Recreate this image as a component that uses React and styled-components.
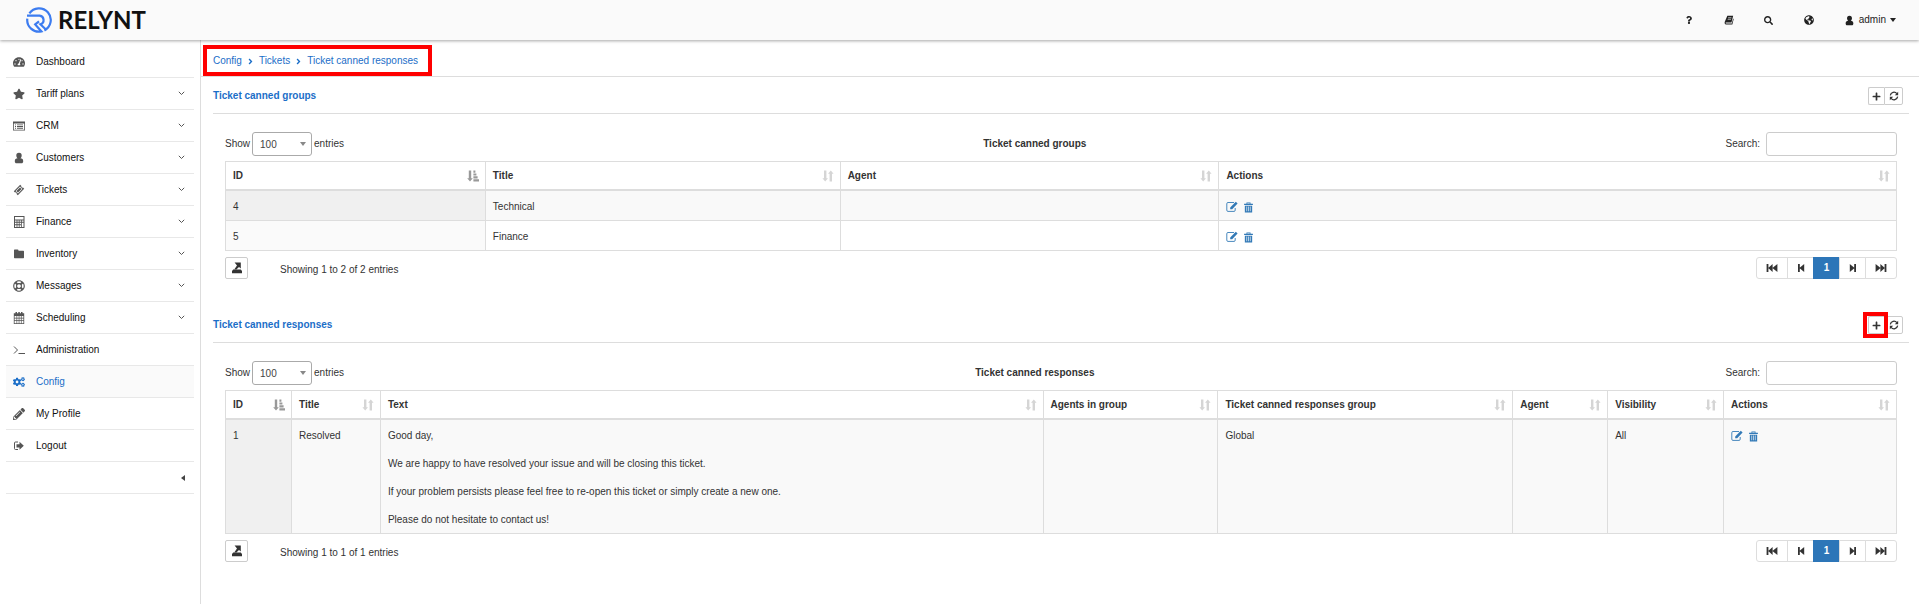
import React from 'react';
import styled, { createGlobalStyle, css } from 'styled-components';
import {
  FaTachometerAlt, FaStar, FaRegLifeRing, FaCogs, FaPencilAlt, FaAngleRight,
  FaPlus, FaSearch, FaGlobeAmericas, FaQuestion,
} from 'react-icons/fa';

const GlobalStyle = createGlobalStyle`
  * { box-sizing: border-box; }
  html, body { margin: 0; }
  body {
    background: #fff;
    color: #333;
    font: 10px/14px "Liberation Sans", Arial, sans-serif;
  }
  button, input, select { font: inherit; color: inherit; }
  a { text-decoration: none; }
  svg { display: block; flex: none; }
`;

/* ---------- icons ---------- */

const Icon = ({ children, size = 12, ...rest }) => (
  <svg width={size} height={size} viewBox="0 0 12 12" fill="currentColor" aria-hidden="true" {...rest}>{children}</svg>
);
const UserIcon = (p) => (
  <Icon {...p}><path d="M6 .8C7.9.8 8.8 2.1 8.7 3.8 8.6 5.1 7.8 6 7.4 6.3 9.2 6.4 10.2 7.2 10.2 9.2 10.2 10.6 9.4 11.2 8.6 11.2H3.4C2.6 11.2 1.8 10.6 1.8 9.2 1.8 7.2 2.8 6.4 4.6 6.3 4.2 6 3.4 5.1 3.3 3.8 3.2 2.1 4.1.8 6 .8Z" /></Icon>
);
const ListIcon = (p) => (
  <Icon {...p}>
    <path fillRule="evenodd" d="M0 1.5H12V10.5H0ZM.8 3.5V9.7H11.2V3.5Z" />
    <path d="M2 4.4H3V5.3H2ZM4 4.4H10V5.3H4ZM2 6.1H3V7H2ZM4 6.1H10V7H4ZM2 7.8H3V8.7H2ZM4 7.8H10V8.7H4Z" />
  </Icon>
);
const TicketIcon = (p) => (
  <Icon {...p}>
    <path fillRule="evenodd" d="M7.2 .8 8.4 2A1.2 1.2 0 0 0 10 3.6L11.2 4.8 4.8 11.2 3.6 10A1.2 1.2 0 0 0 2 8.4L.8 7.2ZM7 2.6 2.6 7 5 9.4 9.4 5Z" />
    <path d="M7 3.4 8.6 5 5 8.6 3.4 7Z" />
  </Icon>
);
const CalculatorIcon = (p) => (
  <Icon {...p}>
    <path fillRule="evenodd" d="M1 0H11.5V12H1ZM2 1V3.4H10.5V1ZM2 4.4V5.8H3.6V4.4ZM4.4 4.4V5.8H5.8V4.4ZM6.6 4.4V5.8H8V4.4ZM8.8 4.4V5.8H10.5V4.4ZM2 6.8V8.2H3.6V6.8ZM4.4 6.8V8.2H5.8V6.8ZM6.6 6.8V8.2H8V6.8ZM2 9.3V10.9H3.6V9.3ZM4.4 9.3V10.9H5.8V9.3ZM6.6 9.3V10.9H8V9.3ZM8.8 6.8V10.9H10.5V6.8Z" />
  </Icon>
);
const FolderIcon = (p) => (
  <Icon {...p}><path d="M1.6 1.5H4.6Q5.4 1.5 5.6 2.8H10.4Q11 2.8 11 3.4V9.6Q11 10.2 10.4 10.2H1.6Q1 10.2 1 9.6V2.1Q1 1.5 1.6 1.5Z" /></Icon>
);
const CalendarIcon = (p) => (
  <Icon {...p}>
    <path fillRule="evenodd" d="M2.5 0H4V1.2H5.3V0H6.8V1.2H8V0H9.5V1.2H11.2V12H.8V1.2H2.5ZM1.6 4V5.7H3.5V4ZM4.2 4V5.7H5.7V4ZM6.4 4V5.7H7.9V4ZM8.6 4V5.7H10.4V4ZM1.6 6.4V8.3H3.5V6.4ZM4.2 6.4V8.3H5.7V6.4ZM6.4 6.4V8.3H7.9V6.4ZM8.6 6.4V8.3H10.4V6.4ZM1.6 9V11.2H3.5V9ZM4.2 9V11.2H5.7V9ZM6.4 9V11.2H7.9V9ZM8.6 9V11.2H10.4V9Z" />
  </Icon>
);
const TerminalIcon = (p) => (
  <Icon {...p}><path d="M1 2.5 4.5 6 1 9.5M5.5 9.5H12" fill="none" stroke="currentColor" /></Icon>
);
const LogoutIcon = (p) => (
  <Icon {...p}>
    <path d="M5 2H2.5A1 1 0 0 0 1.5 3V8.5A1 1 0 0 0 2.5 9.5H5" fill="none" stroke="currentColor" />
    <path d="M3.5 4.2H6.5V1.8L10.8 5.8 6.5 9.8V7.4H3.5Z" />
  </Icon>
);
const BookIcon = (p) => (
  <Icon {...p}>
    <path fillRule="evenodd" d="M4 1H11L9 9H2.2Q1.5 9.8 2.4 10.2H9.4L11 4.2Q11.8 4.6 11.5 5.4L10 11.4H2Q.2 10.6.8 8.5ZM5 3 4.8 3.8H8.8L9 3ZM4.5 5 4.3 5.8H8.3L8.5 5Z" />
  </Icon>
);
const RefreshIcon = (p) => (
  <Icon {...p}>
    <path d="M1.6 5.2A4.4 4.4 0 0 1 9.4 3.2M10.4 6.8A4.4 4.4 0 0 1 2.6 8.8" fill="none" stroke="currentColor" strokeWidth="1.5" />
    <path d="M11 1V5H7ZM1 11V7H5Z" />
  </Icon>
);
const EditIcon = (p) => (
  <Icon {...p}>
    <path d="M8 1.5H2A1.2 1.2 0 0 0 .8 2.7V9.2A1.2 1.2 0 0 0 2 10.4H8A1.2 1.2 0 0 0 9.2 9.2V7" fill="none" stroke="currentColor" strokeWidth=".9" />
    <path d="M9.8 .8 11.6 2.6 6.2 8.2H4.2V6.4Z" />
  </Icon>
);
const TrashIcon = (p) => (
  <Icon {...p}>
    <path fillRule="evenodd" d="M3.8.6H8.2V2H10.8V3.4H1.2V2H3.8ZM4.7 1.4V2H7.3V1.4ZM2 4H10V11.4H2ZM3.8 5V10H4.5V5ZM5.7 5V10H6.4V5ZM7.5 5V10H8.2V5Z" />
  </Icon>
);
const SortIcon = (p) => (
  <Icon {...p}>
    <path d="M2 .5H4.4V8.3H6L3.2 11.6.4 8.3H2ZM7.6 11.5H10V3.7H11.6L8.8 .4 6 3.7H7.6Z" />
  </Icon>
);
const SortedIcon = (p) => (
  <Icon {...p}>
    <path d="M1.8 .5H4.2V8.3H5.8L3 11.6.2 8.3H1.8ZM6.4.5H8.4V2.7H6.4ZM6.4 3.4H9.4V5.6H6.4ZM6.4 6.3H10.6V8.5H6.4ZM6.4 9.2H12V11.5H6.4Z" />
  </Icon>
);
const ExportIcon = (p) => (
  <Icon {...p}>
    <path d="M3.6.6H9.8V6.4L8 5 5.6 7.3H3.4L6 3.4ZM2.2 7.4H9.8L11 9V11.2H1V9Z" />
  </Icon>
);
const StepIcon = ({ double, forward }) => (
  <Icon transform={forward ? 'scale(-1 1)' : undefined}>
    {double
      ? <path d="M.6 2H2.4V10H.6ZM2.2 6 6.6 2V10ZM6.4 6 11.4 2V10Z" />
      : <path d="M3 2H4.8V10H3ZM4.4 6 9.2 2V10Z" />}
  </Icon>
);
const AngleIcon = () => (
  <svg width="7" height="5" viewBox="0 0 7 5" fill="none" stroke="currentColor" aria-hidden="true">
    <path d="M.8 .8 3.5 3.5 6.2 .8" />
  </svg>
);
const CaretDown = () => (
  <svg width="6" height="4" viewBox="0 0 6 4" fill="currentColor" aria-hidden="true"><path d="M0 0H6L3 4Z" /></svg>
);
const CaretLeft = () => (
  <svg width="4" height="6" viewBox="0 0 4 6" fill="currentColor" aria-hidden="true"><path d="M4 0V6L0 3Z" /></svg>
);
const LogoMark = () => (
  <svg width="26" height="26" viewBox="0 0 26 26" fill="none" stroke="#3c7cf0" strokeWidth="2.2" aria-hidden="true">
    <path d="M3.4 6.4A11.7 11.7 0 1 1 18.4 23.4" />
    <path d="M1 8.6H13.6A4.4 4.4 0 0 1 14.4 17.2L20.4 23" />
    <path d="M1.3 11.6A11.7 11.7 0 0 0 15.4 24.4L9.2 17.4 13 14.4" />
  </svg>
);

/* ---------- page frame ---------- */

const TopBar = styled.header`
  position: relative;
  z-index: 1;
  display: flex;
  align-items: center;
  justify-content: space-between;
  height: 40px;
  padding: 0 23px 0 26px;
  background: #fafafa;
  box-shadow: 0 1px 3px rgba(0, 0, 0, 0.35);
`;
const Brand = styled.a`
  display: flex;
  align-items: center;
  gap: 6px;
  color: #111;
  font: 700 24px/26px Lato, sans-serif;
`;
const TopActions = styled.nav`
  display: flex;
  align-items: center;
  gap: 30px;
  color: #222;
`;
const TopButton = styled.button`
  display: flex;
  align-items: center;
  justify-content: center;
  gap: ${(p) => (p.$user ? '4px' : '0')};
  min-width: 10px;
  padding: 0;
  border: 0;
  background: none;
`;
const Body = styled.div`
  display: flex;
  min-height: calc(100vh - 40px);
`;
const Sidebar = styled.nav`
  flex: none;
  width: 201px;
  padding: 6px 6px 0;
  border-right: 1px solid #ddd;
`;
const navRow = css`
  display: flex;
  align-items: center;
  width: 100%;
  height: 32px;
  padding: 0 9px 0 7px;
  border: 0;
  border-bottom: 1px solid #e8e8e8;
`;
const NavItem = styled.a`
  ${navRow}
  gap: 11px;
  color: ${(p) => (p.$active ? '#1b6ec8' : '#111')};
  background: ${(p) => (p.$active ? '#fafafa' : 'transparent')};
  svg { color: ${(p) => (p.$active ? '#1b6ec8' : '#555')}; }
`;
const NavLabel = styled.span`
  flex: 1;
`;
const CollapseButton = styled.button`
  ${navRow}
  justify-content: flex-end;
  background: none;
  color: #444;
`;
const Main = styled.main`
  flex: 1;
  min-width: 0;
`;
const Breadcrumbs = styled.nav`
  display: flex;
  align-items: center;
  height: 37px;
  padding: 6px 12px 0;
  border-bottom: 1px solid #ddd;
`;
const Trail = styled.div`
  position: relative;
  display: flex;
  align-items: center;
  gap: 4px;
  color: #1b6ec8;
  a { color: inherit; }
`;
const Highlight = styled.span`
  position: absolute;
  z-index: 1;
  inset: ${(p) => p.$inset};
  border: 4px solid #f00;
  pointer-events: none;
`;

/* ---------- sections ---------- */

const Section = styled.section`
  padding: 0 10px 27px 12px;
`;
const SectionHeader = styled.div`
  display: flex;
  align-items: center;
  justify-content: space-between;
  height: 37px;
  padding: 2px 6px 0 0;
  border-bottom: 1px solid #ddd;
`;
const SectionTitle = styled.h2`
  margin: 0;
  color: #1b6ec8;
  font-size: 10px;
`;
const ButtonGroup = styled.div`
  position: relative;
  display: flex;
`;
const SmallButton = styled.button`
  display: flex;
  align-items: center;
  justify-content: center;
  width: ${(p) => (p.$first ? '16px' : '19px')};
  height: 18px;
  padding: 0;
  border: 1px solid #ccc;
  border-right-width: ${(p) => (p.$first ? '0' : '1px')};
  border-radius: ${(p) => (p.$first ? '2px 0 0 2px' : '0 2px 2px 0')};
  background: #fff;
`;
const SectionBody = styled.div`
  padding: 18px 12px 0;
`;
const Toolbar = styled.div`
  display: flex;
  align-items: center;
  justify-content: space-between;
  margin-bottom: 5px;
`;
const LengthLabel = styled.label`
  display: flex;
  align-items: center;
  gap: 2px;
`;
const SelectBox = styled.span`
  position: relative;
  display: flex;
  svg {
    position: absolute;
    top: 10px;
    right: 6px;
    color: #888;
    pointer-events: none;
  }
`;
const Select = styled.select`
  appearance: none;
  width: 60px;
  height: 24px;
  padding: 2px 7px 0;
  border: 1px solid #aaa;
  border-radius: 3px;
  background: #fff;
  color: #444;
`;
const TableTitle = styled.strong`
  text-align: center;
`;
const SearchLabel = styled.label`
  display: flex;
  align-items: center;
  gap: 6px;
`;
const SearchInput = styled.input`
  width: 131px;
  height: 24px;
  padding: 0 6px;
  border: 1px solid #ccc;
  border-radius: 3px;
  background: #fff;
`;
const Table = styled.table`
  width: 100%;
  table-layout: fixed;
  border-collapse: separate;
  border-spacing: 0;
  border: solid #ddd;
  border-width: 1px 0 0 1px;
`;
const Column = styled.col`
  width: ${(p) => p.$share}%;
`;
const HeadCell = styled.th`
  height: 29px;
  padding: 0 6px 0 7px;
  border: solid #ddd;
  border-width: 0 1px 2px 0;
  text-align: left;
`;
const HeadContent = styled.div`
  display: flex;
  align-items: center;
  justify-content: space-between;
  svg { color: ${(p) => (p.$sorted ? '#999' : '#d5d5d5')}; }
`;
const Cell = styled.td`
  padding: 9px 6px 6px 7px;
  border: solid #ddd;
  border-width: 0 1px 1px 0;
  vertical-align: top;
  white-space: pre-line;
`;
const Row = styled.tr`
  background: #fff;
  ${Cell}:first-child { background: #fafafa; }
  &:nth-child(odd) { background: #f9f9f9; }
  &:nth-child(odd) ${Cell}:first-child { background: #f0f0f0; }
`;
const RowActions = styled.div`
  display: flex;
  align-items: center;
  gap: 5px;
  height: 14px;
  color: #337ab7;
`;
const ActionLink = styled.a`
  color: inherit;
`;
const TableFooter = styled.div`
  display: flex;
  align-items: center;
  margin-top: 6px;
`;
const ExportButton = styled.button`
  display: flex;
  align-items: center;
  justify-content: center;
  width: 23px;
  height: 22px;
  padding: 0;
  border: 1px solid #ccc;
  border-radius: 2px;
  background: #fff;
`;
const TableInfo = styled.span`
  flex: 1;
  padding: 4px 0 0 32px;
`;
const Pager = styled.nav`
  display: flex;
`;
const PageButton = styled.button`
  display: flex;
  align-items: center;
  justify-content: center;
  width: ${(p) => (p.$wide ? '32px' : '27px')};
  height: 22px;
  margin-left: -1px;
  padding: 0;
  border: 1px solid ${(p) => (p.$active ? '#2d76b8' : '#ddd')};
  background: ${(p) => (p.$active ? '#2d76b8' : '#fff')};
  color: ${(p) => (p.$active ? '#fff' : '#333')};
  font-weight: 700;
  &:first-child { margin-left: 0; border-radius: 3px 0 0 3px; }
  &:last-child { border-radius: 0 3px 3px 0; }
`;

/* ---------- data ---------- */

const NAV = [
  { label: 'Dashboard', icon: FaTachometerAlt },
  { label: 'Tariff plans', icon: FaStar, more: true },
  { label: 'CRM', icon: ListIcon, more: true },
  { label: 'Customers', icon: UserIcon, more: true },
  { label: 'Tickets', icon: TicketIcon, more: true },
  { label: 'Finance', icon: CalculatorIcon, more: true },
  { label: 'Inventory', icon: FolderIcon, more: true },
  { label: 'Messages', icon: FaRegLifeRing, more: true },
  { label: 'Scheduling', icon: CalendarIcon, more: true },
  { label: 'Administration', icon: TerminalIcon },
  { label: 'Config', icon: FaCogs, active: true },
  { label: 'My Profile', icon: FaPencilAlt },
  { label: 'Logout', icon: LogoutIcon },
];

const GROUPS = {
  title: 'Ticket canned groups',
  columns: [['ID', 260], ['Title', 355], ['Agent', 379], ['Actions', 678]],
  rows: [['4', 'Technical', ''], ['5', 'Finance', '']],
  info: 'Showing 1 to 2 of 2 entries',
};

const RESPONSES = {
  title: 'Ticket canned responses',
  columns: [
    ['ID', 66], ['Title', 89], ['Text', 663], ['Agents in group', 175],
    ['Ticket canned responses group', 295], ['Agent', 95], ['Visibility', 116], ['Actions', 173],
  ],
  rows: [[
    '1',
    'Resolved',
    'Good day,\n\nWe are happy to have resolved your issue and will be closing this ticket.\n\nIf your problem persists please feel free to re-open this ticket or simply create a new one.\n\nPlease do not hesitate to contact us!',
    '', 'Global', '', 'All',
  ]],
  info: 'Showing 1 to 1 of 1 entries',
};

function DataSection({ title, columns, rows, info, highlightAdd }) {
  const total = columns.reduce((sum, [, weight]) => sum + weight, 0);
  return (
    <Section>
      <SectionHeader>
        <SectionTitle>{title}</SectionTitle>
        <ButtonGroup>
          <SmallButton type="button" $first aria-label="Add"><FaPlus size={9} /></SmallButton>
          <SmallButton type="button" aria-label="Refresh"><RefreshIcon size={10} /></SmallButton>
          {highlightAdd && <Highlight $inset="-4px 15px -4px -5px" />}
        </ButtonGroup>
      </SectionHeader>
      <SectionBody>
        <Toolbar>
          <LengthLabel>
            Show
            <SelectBox>
              <Select defaultValue="100">
                <option>10</option>
                <option>25</option>
                <option>50</option>
                <option>100</option>
              </Select>
              <CaretDown />
            </SelectBox>
            entries
          </LengthLabel>
          <TableTitle>{title}</TableTitle>
          <SearchLabel>Search:<SearchInput type="search" /></SearchLabel>
        </Toolbar>
        <Table>
          <colgroup>
            {columns.map(([name, weight]) => <Column key={name} $share={(weight / total) * 100} />)}
          </colgroup>
          <thead>
            <tr>
              {columns.map(([name], i) => (
                <HeadCell key={name} scope="col">
                  <HeadContent $sorted={i === 0}>{name}{i === 0 ? <SortedIcon /> : <SortIcon />}</HeadContent>
                </HeadCell>
              ))}
            </tr>
          </thead>
          <tbody>
            {rows.map((row) => (
              <Row key={row[0]}>
                {row.map((value, i) => <Cell key={columns[i][0]}>{value}</Cell>)}
                <Cell>
                  <RowActions>
                    <ActionLink href="#edit" aria-label="Edit"><EditIcon /></ActionLink>
                    <ActionLink href="#delete" aria-label="Delete"><TrashIcon size={11} /></ActionLink>
                  </RowActions>
                </Cell>
              </Row>
            ))}
          </tbody>
        </Table>
        <TableFooter>
          <ExportButton type="button" aria-label="Export"><ExportIcon /></ExportButton>
          <TableInfo>{info}</TableInfo>
          <Pager aria-label={`${title} pages`}>
            <PageButton type="button" $wide aria-label="First"><StepIcon double /></PageButton>
            <PageButton type="button" aria-label="Previous"><StepIcon /></PageButton>
            <PageButton type="button" $active>1</PageButton>
            <PageButton type="button" aria-label="Next"><StepIcon forward /></PageButton>
            <PageButton type="button" $wide aria-label="Last"><StepIcon double forward /></PageButton>
          </Pager>
        </TableFooter>
      </SectionBody>
    </Section>
  );
}

export default function App() {
  return (
    <>
      <GlobalStyle />
      <TopBar>
        <Brand href="#home"><LogoMark />RELYNT</Brand>
        <TopActions>
          <TopButton type="button" aria-label="Help"><FaQuestion size={8} /></TopButton>
          <TopButton type="button" aria-label="Documentation"><BookIcon size={10} /></TopButton>
          <TopButton type="button" aria-label="Search"><FaSearch size={9} /></TopButton>
          <TopButton type="button" aria-label="Language"><FaGlobeAmericas size={10} /></TopButton>
          <TopButton type="button" $user><UserIcon size={11} />admin<CaretDown /></TopButton>
        </TopActions>
      </TopBar>
      <Body>
        <Sidebar>
          {NAV.map(({ label, icon: ItemIcon, more, active }) => (
            <NavItem key={label} href="#" $active={active}>
              <ItemIcon size={12} />
              <NavLabel>{label}</NavLabel>
              {more && <AngleIcon />}
            </NavItem>
          ))}
          <CollapseButton type="button" aria-label="Collapse menu"><CaretLeft /></CollapseButton>
        </Sidebar>
        <Main>
          <Breadcrumbs>
            <Trail>
              <a href="#config">Config</a>
              <FaAngleRight size={9} />
              <a href="#tickets">Tickets</a>
              <FaAngleRight size={9} />
              <a href="#responses">Ticket canned responses</a>
              <Highlight $inset="-9px -14px -8px -10px" />
            </Trail>
          </Breadcrumbs>
          <DataSection {...GROUPS} />
          <DataSection {...RESPONSES} highlightAdd />
        </Main>
      </Body>
    </>
  );
}
